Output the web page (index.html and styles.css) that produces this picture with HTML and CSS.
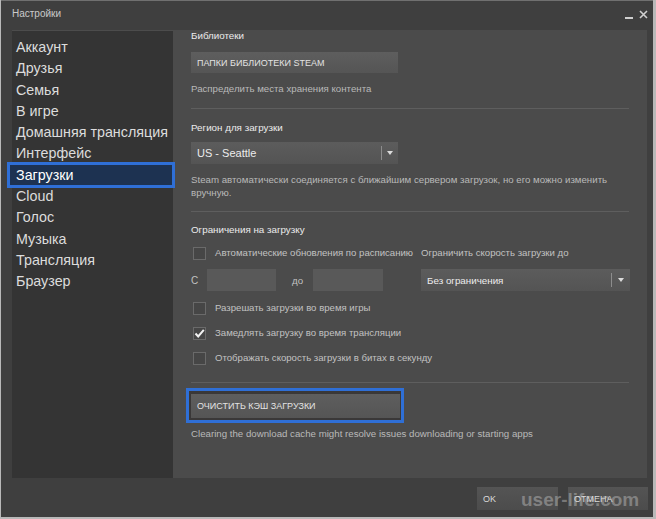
FILE: index.html
```html
<!DOCTYPE html>
<html lang="ru">
<head>
<meta charset="utf-8">
<title>Настройки</title>
<link rel="stylesheet" href="styles.css">
</head>
<body>
<div class="window">
  <div class="titlebar">
    <span class="title">Настройки</span>
    <div class="controls">
      <span class="min"></span>
      <svg class="close" width="9" height="9" viewBox="0 0 9 9"><path d="M1 1 L8 8 M8 1 L1 8" stroke="#d0d0d0" stroke-width="1.6" fill="none"/></svg>
    </div>
  </div>
  <div class="main">
    <ul class="sidebar">
      <li class="item">Аккаунт</li>
      <li class="item">Друзья</li>
      <li class="item">Семья</li>
      <li class="item">В игре</li>
      <li class="item">Домашняя трансляция</li>
      <li class="item">Интерфейс</li>
      <li class="item active"><span>Загрузки</span></li>
      <li class="item">Cloud</li>
      <li class="item">Голос</li>
      <li class="item">Музыка</li>
      <li class="item">Трансляция</li>
      <li class="item">Браузер</li>
    </ul>
    <div class="panel">
      <div class="heading h-lib">Библиотеки</div>
      <div class="btn wide b-lib">ПАПКИ БИБЛИОТЕКИ STEAM</div>
      <div class="desc d-lib">Распределить места хранения контента</div>
      <div class="sep s1"></div>
      <div class="heading h-region">Регион для загрузки</div>
      <div class="select sel-region"><span class="val">US - Seattle</span><span class="arrow"></span></div>
      <div class="desc d-region">Steam автоматически соединяется с ближайшим сервером загрузок, но его можно изменить вручную.</div>
      <div class="sep s2"></div>
      <div class="heading h-limit">Ограничения на загрузку</div>
      <div class="grid">
        <div class="check-row"><span class="box"></span><span class="label">Автоматические обновления по расписанию</span></div>
        <div class="label">Ограничить скорость загрузки до</div>
        <div class="time-row"><span class="lbl-c">С</span><span class="input in1"></span><span class="lbl-do">до</span><span class="input in2"></span></div>
        <div class="select sel-speed"><span class="val">Без ограничения</span><span class="arrow"></span></div>
      </div>
      <div class="check-row r3"><span class="box"></span><span class="label">Разрешать загрузки во время игры</span></div>
      <div class="check-row r4"><span class="box checked"><svg width="13" height="13" viewBox="0 0 13 13"><path d="M2.5 6.5 L5.2 9.5 L10.8 2.8" stroke="#f2f2f2" stroke-width="2" fill="none"/></svg></span><span class="label">Замедлять загрузку во время трансляции</span></div>
      <div class="check-row r5"><span class="box"></span><span class="label">Отображать скорость загрузки в битах в секунду</span></div>
      <div class="sep s3"></div>
      <div class="clear-wrap"><div class="btn clear">ОЧИСТИТЬ КЭШ ЗАГРУЗКИ</div></div>
      <div class="desc d-clear">Clearing the download cache might resolve issues downloading or starting apps</div>
    </div>
  </div>
  <div class="footer">
    <div class="btn fbtn ok">OK</div>
    <div class="btn fbtn cancel">ОТМЕНА</div>
  </div>
  <span class="watermark">user-life.com</span>
</div>
</body>
</html>
```

FILE: styles.css
```css
* { box-sizing: border-box; }
body {
  margin: 0;
  background: #b9b9b9;
  font-family: "Liberation Sans", Arial, sans-serif;
}
.window {
  position: relative;
  margin-left: 1px;
  width: 652px;
  height: 517px;
  background: #3f3f3f;
  border-top: 1px solid #707070;
  display: flex;
  flex-direction: column;
}
.titlebar {
  height: 29px;
  display: flex;
  align-items: flex-start;
  padding: 7px 5px 0 11px;
}
.title {
  font-size: 10px;
  line-height: 12px;
  color: #cacaca;
}
.controls {
  margin-left: auto;
  display: flex;
  align-items: flex-start;
  gap: 6px;
}
.min {
  display: block;
  width: 8px;
  height: 2px;
  margin-top: 9px;
  background: #cfcfcf;
}
.close { display: block; margin-top: 2px; }

.main {
  display: flex;
  height: 448px;
  padding-left: 11px;
}
.sidebar {
  width: 161px;
  margin: 0;
  padding: 6px 0 0 0;
  list-style: none;
  background: #343434;
  border-top: 1px solid #4c4c4c;
}
.item {
  position: relative;
  font-size: 14.3px;
  line-height: 21.3px;
  padding-left: 4px;
  color: #dcdcdc;
  white-space: nowrap;
}
.item.active { color: #ffffff; }
.item.active::before {
  content: "";
  position: absolute;
  left: -5px;
  right: -2px;
  top: -3px;
  bottom: -2px;
  border: 3px solid #2f6fd6;
  background: #1d3251;
}
.item.active span { position: relative; }

.panel {
  width: 474px;
  background: #4b4b4b;
  padding: 0 18px;
  display: flex;
  flex-direction: column;
}
.heading {
  font-size: 9.8px;
  line-height: 12px;
  color: #ececec;
}
.desc {
  font-size: 9.7px;
  line-height: 13px;
  color: #b9b9b9;
}
.sep {
  height: 1px;
  background: #5e5e5e;
  flex: none;
}
.btn {
  display: flex;
  align-items: center;
  font-size: 9px;
  color: #e2e2e2;
  padding-left: 6px;
  background: linear-gradient(#5e5e5e, #555555);
}
.wide { width: 207px; height: 21px; }

.h-lib { margin-top: 0; }
.b-lib { margin-top: 10px; }
.d-lib { margin-top: 9px; }
.s1 { margin-top: 13px; }
.h-region { margin-top: 13px; }
.sel-region { margin-top: 8px; width: 207px; height: 22px; }
.d-region { margin-top: 9px; padding-right: 8px; }
.s2 { margin-top: 12px; }
.h-limit { margin-top: 12px; }

.select {
  display: flex;
  align-items: center;
  background: linear-gradient(#5c5c5c, #545454);
  position: relative;
  padding-left: 6px;
}
.select .val {
  flex: 1;
  font-size: 11px;
  color: #ededed;
}
.select .arrow {
  width: 17px;
  height: 14px;
  border-left: 1px solid #8d8d8d;
  display: flex;
  align-items: center;
  justify-content: center;
}
.select .arrow::after {
  content: "";
  border-left: 3px solid transparent;
  border-right: 3px solid transparent;
  border-top: 4px solid #dcdcdc;
}
.sel-speed { width: 209px; height: 22px; }
.sel-speed .arrow { width: 19px; }
.sel-speed .val { font-size: 9.8px; }

.grid {
  margin-top: 10px;
  display: grid;
  grid-template-columns: 230px 209px;
  grid-template-rows: 14px 22px;
  row-gap: 9px;
  align-items: center;
}
.label {
  font-size: 9.6px;
  line-height: 14px;
  color: #c2c2c2;
  white-space: nowrap;
}
.check-row {
  display: flex;
  align-items: center;
  height: 14px;
}
.box {
  width: 13px;
  height: 13px;
  margin-left: 2px;
  margin-right: 9px;
  border: 1px solid #6a6a6a;
  background: #464646;
  flex: none;
  position: relative;
}
.box svg { position: absolute; left: -1px; top: -1px; }
.time-row {
  display: flex;
  align-items: center;
  height: 22px;
}
.lbl-c {
  width: 16px;
  font-size: 10px;
  color: #c2c2c2;
}
.lbl-do {
  width: 37px;
  padding-left: 16px;
  font-size: 9.7px;
  color: #c2c2c2;
}
.input {
  height: 22px;
  background: #595959;
}
.in1 { width: 69px; }
.in2 { width: 70px; }

.r3 { margin-top: 10px; }
.r4 { margin-top: 11px; }
.r5 { margin-top: 11px; }
.s3 { margin-top: 17px; }

.clear-wrap {
  margin-top: 11px;
  position: relative;
  width: 209px;
  height: 24px;
}
.clear-wrap::before {
  content: "";
  position: absolute;
  left: -5px;
  right: -4px;
  top: -6px;
  bottom: -5px;
  border: 3px solid #2f6fd6;
  background: #3a3838;
}
.clear {
  position: relative;
  height: 24px;
  width: 209px;
}
.d-clear { margin-top: 9px; }

.footer {
  height: 39px;
  display: flex;
  justify-content: flex-end;
  gap: 10px;
  padding: 9px 5px 0 0;
}
.fbtn {
  height: 23px;
  background: linear-gradient(#545454, #4c4c4c);
  color: #dadada;
}
.ok { width: 81px; }
.cancel { width: 80px; }

.watermark {
  position: absolute;
  left: 520px;
  top: 489px;
  font-size: 19px;
  line-height: 19px;
  font-weight: bold;
  color: rgba(215, 215, 215, 0.38);
  white-space: nowrap;
}
```
